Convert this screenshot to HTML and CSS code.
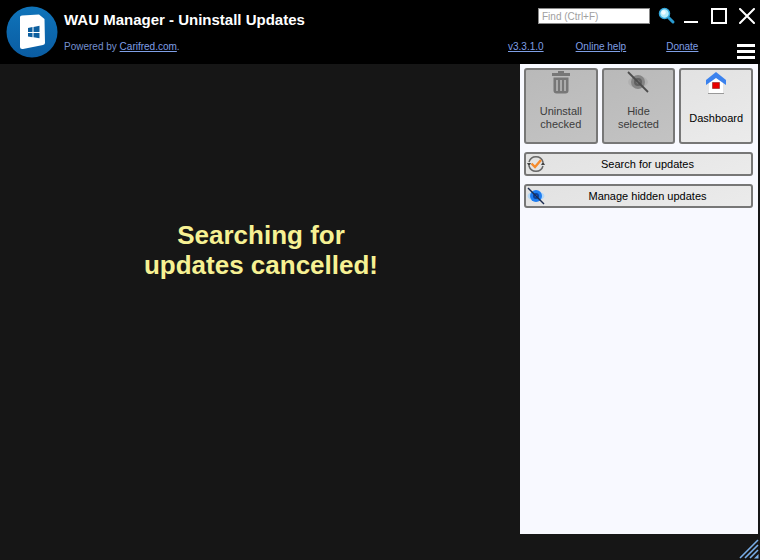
FILE: index.html
```html
<!DOCTYPE html>
<html lang="en">
<head>
  <meta charset="UTF-8" />
  <title>WAU Manager - Uninstall Updates</title>
  <link rel="stylesheet" href="styles.css">
</head>
<body>

<!-- Title bar -->
<header class="titlebar">
  <svg class="logo" viewBox="0 0 52 52">
    <defs>
      <linearGradient id="logoBlue" x1="0" y1="0" x2="0" y2="1">
        <stop offset="0" stop-color="#0f74ba" />
        <stop offset="1" stop-color="#0a5ca2" />
      </linearGradient>
    </defs>
    <circle cx="26" cy="26" r="25.5" fill="url(#logoBlue)" />
    <path d="M14 11 Q14 9.500 16 9.500 L33 8.500 L38.500 13 L39 37 Q39 38.500 37 39 L17 43 Q14 43.500 14 41z" fill="#fff" />
    <path d="M22 22l4.500-.9v4.900H22zM27.500 21l6-1.200V26h-6zM22 27h4.500v4.200l-4.500-.6zM27.500 27h6v5.200l-6-.9z" fill="#0c5f9f" />
  </svg>
  <div class="heading">
    <h1>WAU Manager - Uninstall Updates</h1>
    <p>Powered by <a href="#">Carifred.com</a>.</p>
  </div>
  <div class="tools">
    <div class="tools-row">
      <input class="find" type="text" placeholder="Find (Ctrl+F)" aria-label="Find">
      <button class="icon-btn" aria-label="Search">
        <svg width="18" height="18" viewBox="0 0 18 18">
          <path d="M10.500 10.500l4.500 4.500" stroke="#2a9bd0" stroke-width="3" stroke-linecap="round" />
          <circle cx="6.500" cy="6.500" r="5" fill="#b4ecfa" stroke="#32a8dc" stroke-width="1.500" />
          <circle cx="5.500" cy="5.500" r="2.200" fill="#effcff" />
        </svg>
      </button>
      <div class="window-btns">
        <button class="icon-btn" aria-label="Minimize">
          <svg width="16" height="16" viewBox="0 0 16 16"><path d="M1 14h14" stroke="#fff" stroke-width="2" /></svg>
        </button>
        <button class="icon-btn" aria-label="Maximize">
          <svg width="16" height="16" viewBox="0 0 16 16"><path d="M1 1h14v14H1z" fill="none" stroke="#fff" stroke-width="2" /></svg>
        </button>
        <button class="icon-btn" aria-label="Close">
          <svg width="16" height="16" viewBox="0 0 16 16"><path d="M1 1l14 14M15 1L1 15" stroke="#fff" stroke-width="2" stroke-linecap="round" /></svg>
        </button>
      </div>
    </div>
    <div class="tools-row links-row">
      <nav class="links">
        <a href="#">v3.3.1.0</a>
        <a href="#">Online help</a>
        <a href="#">Donate</a>
      </nav>
      <button class="icon-btn" aria-label="Menu">
        <svg width="18" height="16" viewBox="0 0 18 16"><path d="M0 1.500h18M0 7.500h18M0 13.500h18" stroke="#fff" stroke-width="3" /></svg>
      </button>
    </div>
  </div>
</header>

<div class="content">
  <main class="status">
    <p>Searching for<br>updates cancelled!</p>
  </main>

  <!-- Actions -->
  <aside class="panel">
    <div class="tiles">
      <button class="tile" disabled>
        <svg width="20" height="24" viewBox="0 0 20 24">
          <path d="M1 3h18v3H1zM7 1h6v2H7z" fill="#777" />
          <path d="M2.500 7.500h15v13q0 3-3 3h-9q-3 0-3-3z" fill="#777" />
          <path d="M6 10v11M10 10v11M14 10v11" stroke="#b9b9b9" stroke-width="1.600" />
        </svg>
        <span>Uninstall checked</span>
      </button>
      <button class="tile" disabled>
        <svg width="24" height="24" viewBox="0 0 24 24">
          <ellipse cx="12" cy="12" rx="10" ry="6" fill="#b0b0b0" />
          <circle cx="12" cy="12" r="7" fill="#858585" />
          <circle cx="12" cy="12" r="4" fill="#606060" />
          <circle cx="12" cy="12" r="1.500" fill="#999" />
          <path d="M2 2l20 20" stroke="#4c4c4c" stroke-width="1.800" />
        </svg>
        <span>Hide selected</span>
      </button>
      <button class="tile">
        <svg width="20" height="24" viewBox="0 0 20 24">
          <path d="M3 10l7-6 7 6v13H3z" fill="#fff" />
          <path d="M2 23.500h16" stroke="#999" />
          <path d="M10 2L0 10v5l10-7 10 7v-5z" fill="#3b82ee" />
          <path d="M6.500 12.500h7v6h-7z" fill="#e80000" stroke="#8c2020" stroke-width=".6" />
        </svg>
        <span>Dashboard</span>
      </button>
    </div>
    <button class="wide">
      <svg width="18" height="18" viewBox="0 0 18 18">
        <path d="M2 7a7.300 7.300 0 0 1 14 0M16 11a7.300 7.300 0 0 1-14 0" fill="none" stroke="#666" stroke-width="1.500" />
        <path d="M14 10h4l-2-3.500zM0 8h4l-2 3.500z" fill="#444" />
        <path d="M4.500 8.500l3.500 3.500 6-7" fill="none" stroke="#f58a2c" stroke-width="2.400" />
      </svg>
      <span>Search for updates</span>
    </button>
    <button class="wide">
      <svg width="18" height="18" viewBox="0 0 18 18">
        <ellipse cx="9" cy="9" rx="8.500" ry="4.500" fill="#b4d8f8" />
        <circle cx="9" cy="9" r="6" fill="#1f7df0" />
        <circle cx="9" cy="9" r="3" fill="#0a3f9c" />
        <circle cx="9" cy="9" r="1" fill="#3d80d8" />
        <path d="M1 1l16 16" stroke="#1c2c50" stroke-width="1.500" />
      </svg>
      <span>Manage hidden updates</span>
    </button>
  </aside>
</div>

<footer class="statusbar">
  <svg class="grip" width="20" height="20" viewBox="0 0 20 20">
    <path d="M1 19L19 1M6 19L19 6M11 19l8-8" stroke="#79aee8" stroke-width="1.600" />
    <path d="M15 19.500l4.500-4.500v4.500z" fill="#79aee8" />
  </svg>
</footer>

</body>
</html>
```
FILE: styles.css
```css
* {
  box-sizing: border-box;
}

body {
  margin: 0;
  min-height: 100vh;
  display: flex;
  flex-direction: column;
  background-color: #161616;
  font-family: "Liberation Sans", Arial, sans-serif;
  font-size: 11px;
}

svg {
  display: block;
}

button {
  font: inherit;
  color: #000;
}

/* title bar */
.titlebar {
  display: flex;
  height: 64px;
  padding: 6px 5px 4px 6px;
  background-color: #000;
  font-size: 10px;
  color: #7590cf;
}

.titlebar a {
  color: #7f9fe6;
}

.logo {
  width: 52px;
  height: 52px;
}

.heading {
  flex: 1;
  padding: 4px 0 0 6px;
}

.heading h1 {
  margin: 0 0 8px;
  font-size: 15px;
  line-height: 20px;
  color: #fff;
}

.heading p {
  margin: 0;
  line-height: 18px;
}

.tools {
  width: 247px;
  display: flex;
  flex-direction: column;
  justify-content: space-between;
}

.tools-row {
  display: flex;
  align-items: center;
  justify-content: space-between;
  height: 20px;
}

.links-row {
  height: 22px;
  align-items: flex-start;
}

.links-row .icon-btn {
  align-self: flex-end;
}

.find {
  width: 112px;
  height: 16px;
  margin-left: 30px;
  padding: 0 3px;
  border: 1px solid #888;
  background-color: #fff;
  font: inherit;
}

.find::placeholder {
  color: #a0a0a0;
}

.icon-btn {
  padding: 0;
  border: none;
  background: none;
}

.window-btns {
  display: flex;
  gap: 12px;
}

.links {
  display: flex;
  gap: 32px;
  line-height: 18px;
}

.links a:last-child {
  margin-left: 8px;
}

/* content */
.content {
  flex: 1;
  display: flex;
}

.status {
  flex: 1;
  padding: 156px 0 0 2px;
  text-align: center;
}

.status p {
  margin: 0;
  font-size: 26px;
  font-weight: bold;
  line-height: 30px;
  color: #f6f193;
}

.panel {
  width: 240px;
  padding: 4px 5px 4px 4px;
  border-right: 2px solid #161616;
  background-color: #f8f9ff;
}

.tiles {
  display: grid;
  grid-template-columns: repeat(3, 1fr);
  gap: 4px;
}

.tile,
.wide {
  border: 2px solid #777;
  border-radius: 3px;
  background: linear-gradient(160deg, #e2e2e2, #ebebeb);
}

.tile {
  height: 76px;
  display: flex;
  flex-direction: column;
  align-items: center;
  padding: 0 4px;
  line-height: 13px;
}

.tile span {
  flex: 1;
  display: flex;
  align-items: center;
}

.tile:disabled {
  background: linear-gradient(160deg, #b9b9b9, #c3c3c3);
  color: #3c3c3c;
}

.wide {
  width: 100%;
  height: 24px;
  margin-top: 8px;
  padding: 0 1px;
  display: flex;
  align-items: center;
}

.wide span {
  flex: 1;
}

.statusbar {
  height: 26px;
  display: flex;
  justify-content: flex-end;
  align-items: flex-end;
  padding: 0 1px 1px 0;
}
```
